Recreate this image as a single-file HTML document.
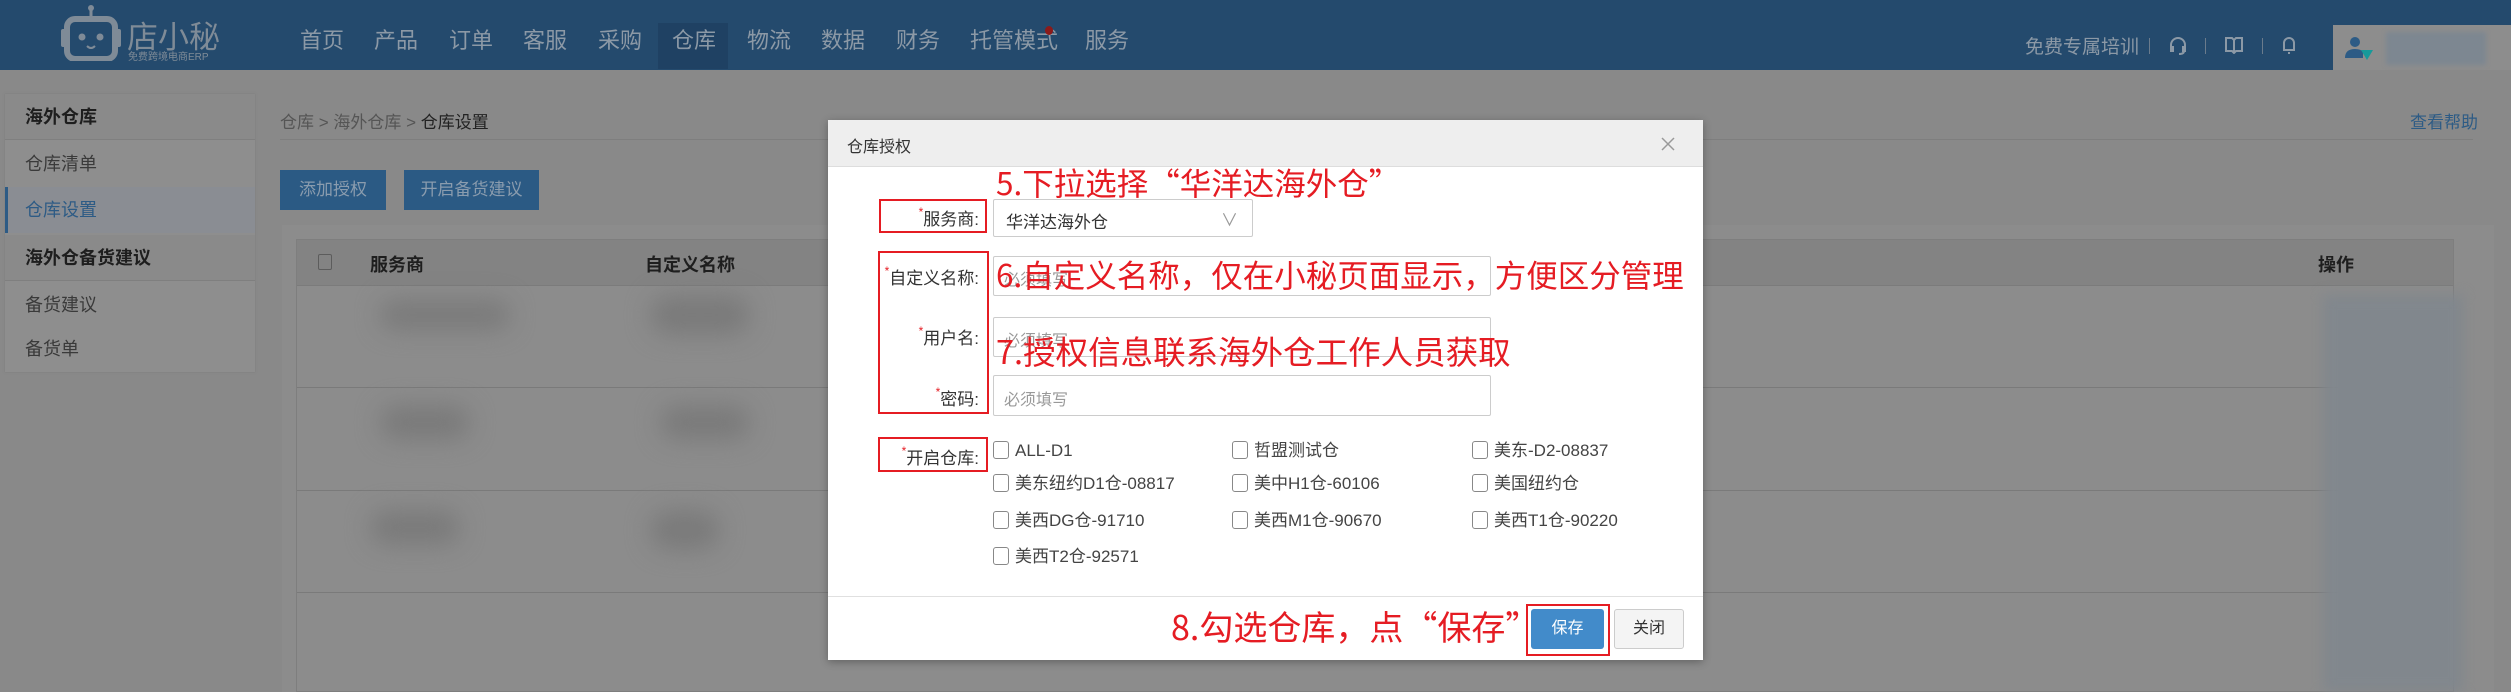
<!DOCTYPE html>
<html><head><meta charset="utf-8"><style>
*{margin:0;padding:0;box-sizing:border-box}
body{width:2511px;height:692px;overflow:hidden;background:#898989;font-family:"Liberation Sans","Noto Sans CJK SC",sans-serif;position:relative;color:#1e1e1e}
.a{position:absolute;white-space:nowrap}
.hdr{position:absolute;left:0;top:0;width:2511px;height:70px;background:#244a6d}
.nav{font-size:22px;color:#8c99a6;top:28px;line-height:26px}
.side{position:absolute;left:5px;top:94px;width:250px;height:278px;background:#8e8e8e;box-shadow:0 0 2px #7a7a7a}
.side div{position:absolute;left:0;width:250px;height:46px;line-height:46px;padding-left:20px;font-size:18px;color:#3a3a3a}
.side .h{font-weight:bold;color:#1e1e1e;background:#8a8a8a;border-bottom:1px solid #7f7f7f}
.blob{position:absolute;background:#7a7a7a;filter:blur(12px);border-radius:20px}
.red{position:absolute;border:2px solid #e51c23}
.ann{position:absolute;color:#e51c23;white-space:nowrap;font-family:"Noto Sans CJK SC",sans-serif;line-height:1}
.lbl{position:absolute;right:1532px;font-size:17px;color:#333;white-space:nowrap}
.lbl i{color:#e51c23;font-style:normal;font-size:12px;vertical-align:top}
.inp{position:absolute;border:1px solid #ccc;background:#fff;border-radius:2px}
.ph{font-size:16px;color:#999;position:absolute;left:10px}
.cb{position:absolute;font-size:17px;color:#444;white-space:nowrap;line-height:22px}
.cb span{display:inline-block;width:16px;height:18px;border:1px solid #888;border-radius:3px;vertical-align:-3px;margin-right:6px}
</style></head><body>
<div class="hdr"></div>
<svg class="a" style="left:60px;top:5px" width="62" height="56" viewBox="0 0 62 56"><circle cx="31" cy="3" r="3" fill="#7f8b97"/><rect x="29.5" y="4" width="3" height="10" fill="#7f8b97"/><rect x="7" y="14" width="48" height="40" rx="8" fill="none" stroke="#7f8b97" stroke-width="6"/><rect x="1" y="24" width="5" height="18" rx="2" fill="#7f8b97"/><rect x="56" y="24" width="5" height="18" rx="2" fill="#7f8b97"/><circle cx="22" cy="32" r="3.5" fill="#7f8b97"/><circle cx="40" cy="32" r="3.5" fill="#7f8b97"/><path d="M27 41 q4 4 8 0" stroke="#7f8b97" stroke-width="2" fill="none"/></svg>
<div class="a" style="left:127px;top:12px;font-size:31px;color:#7f8b97">店小秘</div>
<div class="a" style="left:128px;top:48px;font-size:10px;color:#7f8b97">免费跨境电商ERP</div>
<div class="a" style="left:658px;top:23px;width:70px;height:46px;background:#1f4163"></div>
<div class="a nav" style="left:300px">首页</div>
<div class="a nav" style="left:374px">产品</div>
<div class="a nav" style="left:449px">订单</div>
<div class="a nav" style="left:523px">客服</div>
<div class="a nav" style="left:598px">采购</div>
<div class="a nav" style="left:672px">仓库</div>
<div class="a nav" style="left:747px">物流</div>
<div class="a nav" style="left:821px">数据</div>
<div class="a nav" style="left:896px">财务</div>
<div class="a nav" style="left:970px">托管模式</div>
<div class="a" style="left:1045px;top:26px;width:8px;height:9px;border-radius:50%;background:#8b1a1a"></div>
<div class="a nav" style="left:1085px">服务</div>
<div class="a" style="left:2025px;top:32px;font-size:19px;color:#8c99a6">免费专属培训</div>
<div class="a" style="left:2149px;top:38px;width:1px;height:16px;background:#6a7b8c"></div>
<div class="a" style="left:2205px;top:38px;width:1px;height:16px;background:#6a7b8c"></div>
<div class="a" style="left:2262px;top:38px;width:1px;height:16px;background:#6a7b8c"></div>
<svg class="a" style="left:2168px;top:36px" width="20" height="20" viewBox="0 0 20 20" fill="none" stroke="#8c99a6" stroke-width="2"><path d="M3 12V9a7 7 0 0114 0v3M3 11h2v4H3zM15 11h2v4h-2zM16 15q0 3-5 3"/></svg>
<svg class="a" style="left:2224px;top:36px" width="20" height="18" viewBox="0 0 20 18" fill="none" stroke="#8c99a6" stroke-width="2"><path d="M2 2h6l2 2 2-2h6v13h-6l-2 2-2-2H2zM10 4v12"/></svg>
<svg class="a" style="left:2281px;top:35px" width="16" height="20" viewBox="0 0 16 20" fill="none" stroke="#8c99a6" stroke-width="2"><path d="M3 15V8a5 5 0 0110 0v7H2h12M7 18h2"/></svg>
<div class="a" style="left:2333px;top:25px;width:178px;height:45px;background:#8d8d8d"></div>
<svg class="a" style="left:2345px;top:36px" width="30" height="26" viewBox="0 0 30 26"><circle cx="10" cy="6" r="5" fill="#2d5b85"/><path d="M0 22q0-9 10-9 6 0 8 3v6z" fill="#2d5b85"/><path d="M16 14h12l-6 10z" fill="#169a9a"/></svg>
<div class="a" style="left:2386px;top:32px;width:100px;height:33px;background:#7d8791;filter:blur(2px)"></div>

<div class="side">
<div class="h" style="top:0">海外仓库</div>
<div style="top:47px">仓库清单</div>
<div style="top:93px;background:#8a8d93;border-left:3px solid #2d5b85;color:#2d5b85;padding-left:17px">仓库设置</div>
<div class="h" style="top:141px">海外仓备货建议</div>
<div style="top:188px">备货建议</div>
<div style="top:232px">备货单</div>
</div>
<div class="a" style="left:280px;top:108px;font-size:17px;color:#555">仓库 &gt; 海外仓库 &gt; <span style="color:#222">仓库设置</span></div>
<div class="a" style="left:2410px;top:108px;font-size:17px;color:#2d5b85">查看帮助</div>
<div class="a" style="left:280px;top:139px;width:2193px;height:1px;background:#7e7e7e"></div>
<div class="a" style="left:280px;top:170px;width:106px;height:40px;background:#2b5a84;color:#8a9cae;font-size:17px;line-height:40px;text-align:center">添加授权</div>
<div class="a" style="left:404px;top:170px;width:135px;height:40px;background:#2b5a84;color:#8a9cae;font-size:17px;line-height:40px;text-align:center">开启备货建议</div>
<div class="a" style="left:282px;top:225px;width:2212px;height:467px;background:#8c8c8c"></div>
<div class="a" style="left:296px;top:239px;width:2158px;height:453px;border:1px solid #7e7e7e"></div>
<div class="a" style="left:297px;top:240px;width:2156px;height:46px;background:#838383;border-bottom:1px solid #7b7b7b"></div>
<div class="a" style="left:318px;top:254px;width:14px;height:16px;border:1px solid #5c5c5c;border-radius:2px"></div>
<div class="a" style="left:370px;top:251px;font-size:18px;font-weight:bold;color:#1e1e1e">服务商</div>
<div class="a" style="left:645px;top:251px;font-size:18px;font-weight:bold;color:#1e1e1e">自定义名称</div>
<div class="a" style="left:2318px;top:251px;font-size:18px;font-weight:bold;color:#1e1e1e">操作</div>
<div class="a" style="left:297px;top:387px;width:2156px;height:1px;background:#7a7a7a"></div>
<div class="a" style="left:297px;top:490px;width:2156px;height:1px;background:#7a7a7a"></div>
<div class="a" style="left:297px;top:592px;width:2156px;height:1px;background:#7a7a7a"></div>
<div class="blob" style="left:380px;top:300px;width:130px;height:30px"></div>
<div class="blob" style="left:650px;top:295px;width:100px;height:40px"></div>
<div class="blob" style="left:380px;top:405px;width:90px;height:35px"></div>
<div class="blob" style="left:660px;top:405px;width:90px;height:35px"></div>
<div class="blob" style="left:370px;top:510px;width:90px;height:35px"></div>
<div class="blob" style="left:650px;top:510px;width:70px;height:40px"></div>
<div class="a" style="left:2323px;top:295px;width:140px;height:397px;background:#81878d;filter:blur(6px)"></div>

<div class="a" style="left:828px;top:120px;width:875px;height:540px;background:#fff;box-shadow:0 2px 8px rgba(0,0,0,.3)"></div>
<div class="a" style="left:828px;top:120px;width:875px;height:47px;background:#eeeeee;border-bottom:1px solid #ddd"></div>
<div class="a" style="left:847px;top:133px;font-size:16px;color:#333">仓库授权</div>
<svg class="a" style="left:1660px;top:136px" width="16" height="16" viewBox="0 0 16 16" stroke="#999" stroke-width="1.5"><path d="M2 2l12 12M14 2L2 14"/></svg>

<div class="ann" style="left:996px;top:167px;font-size:31.5px">5.下拉选择“华洋达海外仓”</div>
<div class="red" style="left:879px;top:199px;width:108px;height:34px"></div>
<div class="lbl" style="top:205px"><i>*</i>服务商:</div>
<div class="inp" style="left:993px;top:199px;width:260px;height:38px"><span style="position:absolute;left:12px;top:8px;font-size:17px;color:#333">华洋达海外仓</span><span style="position:absolute;right:14px;top:6px;font-size:17px;color:#999">∨</span></div>

<div class="red" style="left:878px;top:251px;width:111px;height:163px"></div>
<div class="lbl" style="top:264px"><i>*</i>自定义名称:</div>
<div class="inp" style="left:993px;top:256px;width:498px;height:40px"><span class="ph" style="top:9px">必须填写</span></div>
<div class="ann" style="left:996px;top:259px;font-size:31.5px">6.自定义名称，仅在小秘页面显示，方便区分管理</div>
<div class="lbl" style="top:324px"><i>*</i>用户名:</div>
<div class="inp" style="left:993px;top:317px;width:498px;height:40px"><span class="ph" style="top:9px">必须填写</span></div>
<div class="lbl" style="top:385px"><i>*</i>密码:</div>
<div class="inp" style="left:993px;top:375px;width:498px;height:41px"><span class="ph" style="top:10px">必须填写</span></div>
<div class="ann" style="left:996px;top:335px;font-size:32.5px">7.授权信息联系海外仓工作人员获取</div>

<div class="red" style="left:878px;top:437px;width:110px;height:35px"></div>
<div class="lbl" style="top:444px"><i>*</i>开启仓库:</div>
<div class="cb" style="left:993px;top:440px"><span></span>ALL-D1</div>
<div class="cb" style="left:1232px;top:440px"><span></span>哲盟测试仓</div>
<div class="cb" style="left:1472px;top:440px"><span></span>美东-D2-08837</div>
<div class="cb" style="left:993px;top:473px"><span></span>美东纽约D1仓-08817</div>
<div class="cb" style="left:1232px;top:473px"><span></span>美中H1仓-60106</div>
<div class="cb" style="left:1472px;top:473px"><span></span>美国纽约仓</div>
<div class="cb" style="left:993px;top:510px"><span></span>美西DG仓-91710</div>
<div class="cb" style="left:1232px;top:510px"><span></span>美西M1仓-90670</div>
<div class="cb" style="left:1472px;top:510px"><span></span>美西T1仓-90220</div>
<div class="cb" style="left:993px;top:546px"><span></span>美西T2仓-92571</div>

<div class="a" style="left:828px;top:596px;width:875px;height:1px;background:#e0e0e0"></div>
<div class="ann" style="left:1171px;top:609px;font-size:34px">8.勾选仓库，点“保存”</div>
<div class="red" style="left:1526px;top:604px;width:84px;height:52px"></div>
<div class="a" style="left:1531px;top:609px;width:73px;height:40px;background:#428bca;border-radius:3px;color:#fff;font-size:16px;line-height:40px;text-align:center">保存</div>
<div class="a" style="left:1614px;top:609px;width:70px;height:40px;background:#f4f4f4;border:1px solid #ccc;border-radius:3px;color:#333;font-size:16px;line-height:38px;text-align:center">关闭</div>
</body></html>
